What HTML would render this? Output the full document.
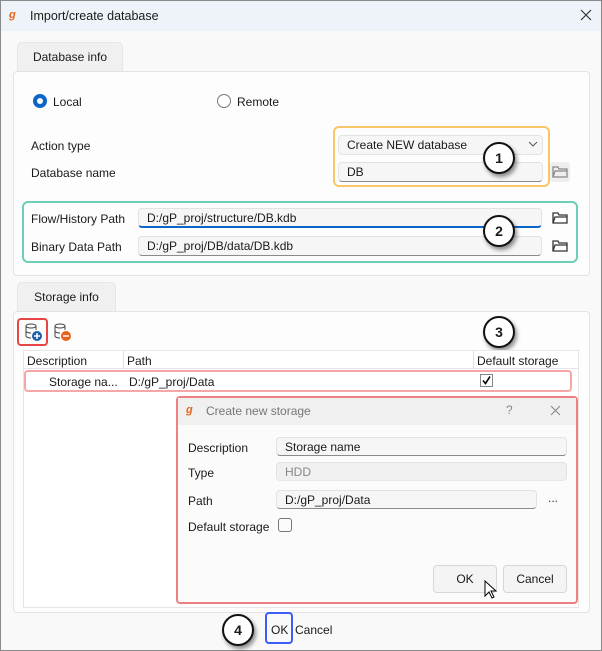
<!DOCTYPE html>
<html><head><style>
*{box-sizing:border-box;margin:0;padding:0}
body{width:602px;height:651px;overflow:hidden;font-family:"Liberation Sans",sans-serif;font-size:12px;color:#1a1a1a;background:#fff;position:relative}
.a{position:absolute}
.win{left:0;top:0;width:602px;height:651px;border:1px solid #8a8a8a;background:#f9f9f9}
.title{left:1px;top:1px;width:600px;height:30px;background:#eef3fa}
.tab{background:#f0f0f0;border:1px solid #e6e6e6;border-bottom:none;border-radius:5px 5px 0 0;text-align:center;line-height:28px}
.panel{background:#fdfdfd;border:1px solid #e3e3e3;border-radius:4px}
.inp{background:#f6f6f6;border:1px solid #e2e2e2;border-bottom:1px solid #8a8a8a;border-radius:4px;padding-left:8px;line-height:18px}
.circ{width:32px;height:32px;border-radius:50%;background:#fff;border:2px solid #111;box-shadow:2px 3px 4px rgba(0,0,0,.45);text-align:center;line-height:28px;font-weight:bold;font-size:14px}
.btn{background:#f4f4f4;border:1px solid #d6d6d6;border-radius:4px;text-align:center;line-height:26px}
</style></head><body>
<div class="a win"></div>
<div class="a title"></div>
<div class="a" style="left:9px;top:9px;color:#e8641b;font-weight:bold;font-size:11px;font-style:italic">ɡ</div>
<div class="a" style="left:30px;top:9px;font-size:12.5px">Import/create database</div>
<svg class="a" style="left:580px;top:9px" width="12" height="12"><path d="M1 1L11 11M11 1L1 11" stroke="#333" stroke-width="1.2"/></svg>

<div class="a tab" style="left:17px;top:42px;width:106px;height:30px">Database info</div>
<div class="a panel" style="left:13px;top:71px;width:577px;height:205px"></div>
<div class="a" style="left:33px;top:94px;width:14px;height:14px;border-radius:50%;background:#0a66c8"></div>
<div class="a" style="left:37px;top:98px;width:6px;height:6px;border-radius:50%;background:#fff"></div>
<div class="a" style="left:53px;top:95px">Local</div>
<div class="a" style="left:217px;top:94px;width:14px;height:14px;border-radius:50%;border:1px solid #777;background:#fff"></div>
<div class="a" style="left:237px;top:95px">Remote</div>
<div class="a" style="left:31px;top:139px">Action type</div>
<div class="a" style="left:31px;top:166px">Database name</div>
<div class="a" style="left:333px;top:126px;width:217px;height:61px;border:2.5px solid #f9c56a;border-radius:6px"></div>
<div class="a inp" style="left:338px;top:135px;width:205px;height:20px;border-bottom-color:#e2e2e2">Create NEW database</div>
<svg class="a" style="left:528px;top:141px" width="10" height="6"><path d="M1 1l4 4 4-4" fill="none" stroke="#555"/></svg>
<div class="a inp" style="left:338px;top:162px;width:205px;height:20px">DB</div>
<div class="a" style="left:550px;top:162px;width:20px;height:20px;background:#eee;border-radius:3px"></div>
<svg class="a" style="left:552px;top:166px" width="16" height="12"><path d="M1 1h5l1 2h8v8H1z" fill="none" stroke="#888" stroke-width="1.3"/><path d="M1 11l2-6h12" fill="none" stroke="#888" stroke-width="1.3"/></svg>
<div class="a circ" style="left:483px;top:142px">1</div>

<div class="a" style="left:22px;top:201px;width:556px;height:62px;border:2.5px solid #6dcdb8;border-radius:6px"></div>
<div class="a" style="left:31px;top:212px">Flow/History Path</div>
<div class="a" style="left:31px;top:240px">Binary Data Path</div>
<div class="a inp" style="left:138px;top:208px;width:404px;height:20px;border-bottom:2px solid #0a66c8">D:/gP_proj/structure/DB.kdb</div>
<div class="a inp" style="left:138px;top:236px;width:404px;height:20px">D:/gP_proj/DB/data/DB.kdb</div>
<svg class="a" style="left:552px;top:212px" width="16" height="12"><path d="M1 1h5l1 2h8v8H1z" fill="none" stroke="#333" stroke-width="1.3"/><path d="M1 11l2-6h12" fill="none" stroke="#333" stroke-width="1.3"/></svg>
<svg class="a" style="left:552px;top:240px" width="16" height="12"><path d="M1 1h5l1 2h8v8H1z" fill="none" stroke="#333" stroke-width="1.3"/><path d="M1 11l2-6h12" fill="none" stroke="#333" stroke-width="1.3"/></svg>
<div class="a circ" style="left:483px;top:215px">2</div>

<div class="a tab" style="left:17px;top:282px;width:99px;height:30px">Storage info</div>
<div class="a panel" style="left:13px;top:311px;width:577px;height:302px"></div>
<div class="a" style="left:17px;top:318px;width:31px;height:28px;border:2.5px solid #e84545;border-radius:4px"></div>
<svg class="a" style="left:24px;top:322px" width="20" height="20"><ellipse cx="7" cy="4" rx="5" ry="2" fill="none" stroke="#444"/><path d="M2 4v10M12 4v4M2 9c0 1 2 2 5 2M2 14c0 1 2 2 5 2" fill="none" stroke="#444"/><circle cx="13" cy="14" r="5" fill="#1a5fa8"/><path d="M10 14h6M13 11v6" stroke="#fff" stroke-width="1.5"/></svg>
<svg class="a" style="left:53px;top:322px" width="20" height="20"><ellipse cx="7" cy="4" rx="5" ry="2" fill="none" stroke="#444"/><path d="M2 4v10M12 4v4M2 9c0 1 2 2 5 2M2 14c0 1 2 2 5 2" fill="none" stroke="#444"/><circle cx="13" cy="14" r="5" fill="#e8641b"/><path d="M10 14h6" stroke="#fff" stroke-width="1.5"/></svg>
<div class="a circ" style="left:483px;top:316px">3</div>
<div class="a" style="left:23px;top:350px;width:556px;height:258px;background:#fff;border:1px solid #e6e6e6"></div>
<div class="a" style="left:23px;top:350px;width:556px;height:19px;border-bottom:1px solid #e6e6e6"></div>
<div class="a" style="left:123px;top:350px;width:1px;height:19px;background:#e0e0e0"></div>
<div class="a" style="left:473px;top:350px;width:1px;height:19px;background:#e0e0e0"></div>
<div class="a" style="left:27px;top:354px">Description</div>
<div class="a" style="left:127px;top:354px">Path</div>
<div class="a" style="left:477px;top:354px">Default storage</div>
<div class="a" style="left:24px;top:370px;width:548px;height:22px;border:2.5px solid #f6a6a6;border-radius:4px"></div>
<div class="a" style="left:49px;top:375px">Storage na...</div>
<div class="a" style="left:129px;top:375px">D:/gP_proj/Data</div>
<div class="a" style="left:480px;top:374px;width:13px;height:13px;border:1px solid #888"></div>
<svg class="a" style="left:481px;top:375px" width="11" height="11"><path d="M2 5.5l2.5 3L9 1.5" fill="none" stroke="#000" stroke-width="1.6"/></svg>

<div class="a" style="left:176px;top:396px;width:402px;height:208px;background:#fbfbfb;border:2.5px solid #ef8080;border-radius:4px"></div>
<div class="a" style="left:178px;top:398px;width:398px;height:27px;background:#f0f0f0"></div>
<div class="a" style="left:186px;top:404px;color:#e8641b;font-weight:bold;font-size:11px;font-style:italic">ɡ</div>
<div class="a" style="left:206px;top:404px;color:#777">Create new storage</div>
<div class="a" style="left:506px;top:403px;color:#888">?</div>
<svg class="a" style="left:550px;top:405px" width="11" height="11"><path d="M1 1L10 10M10 1L1 10" stroke="#888" stroke-width="1.1"/></svg>
<div class="a" style="left:188px;top:441px">Description</div>
<div class="a" style="left:188px;top:466px">Type</div>
<div class="a" style="left:188px;top:494px">Path</div>
<div class="a" style="left:188px;top:520px">Default storage</div>
<div class="a inp" style="left:276px;top:437px;width:291px;height:19px">Storage name</div>
<div class="a inp" style="left:276px;top:462px;width:291px;height:19px;color:#888;border-bottom-color:#e8e8e8;background:#f0f0f0">HDD</div>
<div class="a inp" style="left:276px;top:490px;width:261px;height:19px">D:/gP_proj/Data</div>
<div class="a" style="left:548px;top:491px;color:#333">...</div>
<div class="a" style="left:278px;top:518px;width:14px;height:14px;border:1.5px solid #777;border-radius:3px"></div>
<div class="a btn" style="left:433px;top:565px;width:64px;height:28px">OK</div>
<div class="a btn" style="left:503px;top:565px;width:64px;height:28px">Cancel</div>
<svg class="a" style="left:484px;top:580px" width="14" height="20"><path d="M1 1v15l4-4 3 6 2-1-3-6h5z" fill="#fff" stroke="#000"/></svg>

<div class="a circ" style="left:222px;top:614px">4</div>
<div class="a" style="left:265px;top:612px;width:28px;height:32px;border:2.5px solid #3b5ef5;border-radius:4px"></div>
<div class="a" style="left:271px;top:623px">OK</div>
<div class="a" style="left:295px;top:623px">Cancel</div>
</body></html>
